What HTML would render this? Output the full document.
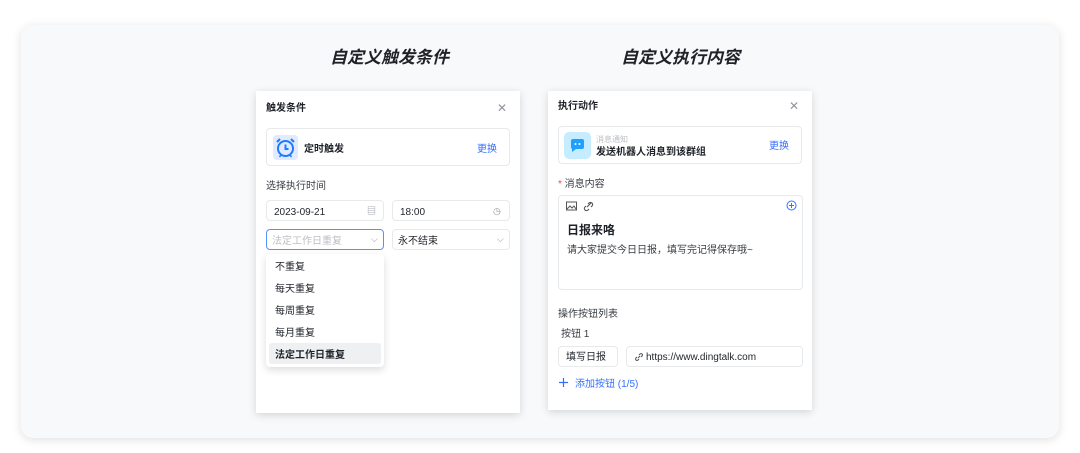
<!DOCTYPE html>
<html><head><meta charset="utf-8"><style>
*{box-sizing:border-box;margin:0;padding:0}
body{width:1080px;height:453px;background:#fff;font-family:"Liberation Sans","Noto Sans CJK SC",sans-serif;position:relative;overflow:hidden;color:#1f2329;line-height:1}
.a{position:absolute;white-space:nowrap}
.card{left:21px;top:25px;width:1038px;height:413px;background:#f8f9fb;border-radius:12px;box-shadow:0 2px 10px rgba(0,0,0,.12)}
.title{font-size:17px;font-weight:bold;font-style:italic;color:#1f2329;top:47px}
.panel{background:#fff;box-shadow:0 2px 8px rgba(0,0,0,.15)}
.h{font-size:10px;font-weight:bold}
.box{border:1px solid #e8e9eb;border-radius:4px;background:#fff}
.t10{font-size:10px}
.blue{color:#3370ff}
.x{font-size:12px;color:#8f959e}
.gray{color:#8f959e}
.h,.t10,.title,.x,.s8{margin-top:2px}
</style></head><body>
<div class="a card"></div>
<div class="a title" style="left:330px">自定义触发条件</div>
<div class="a title" style="left:621px">自定义执行内容</div>

<!-- left panel -->
<div class="a panel" style="left:256px;top:91px;width:264px;height:322px"></div>
<div class="a h" style="left:266px;top:102px">触发条件</div>
<div class="a x" style="left:497px;top:100px">✕</div>
<div class="a box" style="left:266px;top:128px;width:244px;height:38px"></div>
<div class="a" style="left:273px;top:135px;width:25px;height:25px;background:#e1eaff;border-radius:4px"></div>
<svg class="a" style="left:273px;top:135px" width="25" height="25" viewBox="0 0 25 25"><circle cx="12.5" cy="13.5" r="7.5" fill="none" stroke="#1f7cff" stroke-width="2"/><path d="M12.5 9.5v4.5h3" fill="none" stroke="#1f7cff" stroke-width="2"/><path d="M4 7l3-3M21 7l-3-3" stroke="#1f7cff" stroke-width="2"/><path d="M8 20l-1.5 2M17 20l1.5 2" stroke="#1f7cff" stroke-width="1.5"/></svg>
<div class="a h" style="left:304px;top:143px">定时触发</div>
<div class="a t10 blue" style="left:477px;top:143px">更换</div>
<div class="a t10" style="left:266px;top:180px;color:#373c43">选择执行时间</div>
<div class="a box" style="left:266px;top:200px;width:118px;height:21px"></div>
<div class="a t10" style="left:274px;top:206px">2023-09-21</div>
<div class="a gray" style="left:367px;top:207px;font-size:9px">▤</div>
<div class="a box" style="left:392px;top:200px;width:118px;height:21px"></div>
<div class="a t10" style="left:400px;top:206px">18:00</div>
<div class="a gray" style="left:493px;top:207px;font-size:9px">◷</div>
<div class="a box" style="left:266px;top:229px;width:118px;height:21px;border-color:#5b8ff9"></div>
<div class="a t10" style="left:272px;top:235px;color:#bbbfc4">法定工作日重复</div>
<div class="a gray" style="left:371px;top:235px;font-size:9px">⌵</div>
<div class="a box" style="left:392px;top:229px;width:118px;height:21px"></div>
<div class="a t10" style="left:398px;top:235px">永不结束</div>
<div class="a gray" style="left:497px;top:235px;font-size:9px">⌵</div>
<div class="a" style="left:266px;top:254px;width:118px;height:113px;background:#fff;border-radius:4px;box-shadow:0 3px 8px rgba(0,0,0,.14)"></div>
<div class="a t10" style="left:275px;top:261px">不重复</div>
<div class="a t10" style="left:275px;top:283px">每天重复</div>
<div class="a t10" style="left:275px;top:305px">每周重复</div>
<div class="a t10" style="left:275px;top:327px">每月重复</div>
<div class="a" style="left:269px;top:343px;width:112px;height:21px;background:#eff0f1;border-radius:3px"></div>
<div class="a t10" style="left:275px;top:349px;font-weight:bold">法定工作日重复</div>

<!-- right panel -->
<div class="a panel" style="left:548px;top:91px;width:264px;height:319px"></div>
<div class="a h" style="left:558px;top:100px">执行动作</div>
<div class="a x" style="left:789px;top:98px">✕</div>
<div class="a box" style="left:558px;top:126px;width:244px;height:38px"></div>
<div class="a" style="left:564px;top:132px;width:27px;height:27px;background:#c6ecff;border-radius:5px"></div>
<svg class="a" style="left:564px;top:132px" width="27" height="27" viewBox="0 0 27 27"><path d="M7 9a2 2 0 0 1 2-2h9a2 2 0 0 1 2 2v6a2 2 0 0 1-2 2h-6l-4 3v-3a2 2 0 0 1-1-2z" fill="#1f9fff"/><circle cx="11.5" cy="12" r="1" fill="#fff"/><circle cx="15.5" cy="12" r="1" fill="#fff"/></svg>
<div class="a s8" style="left:596px;top:134px;font-size:8px;color:#bbbfc4">消息通知</div>
<div class="a h" style="left:596px;top:146px">发送机器人消息到该群组</div>
<div class="a t10 blue" style="left:769px;top:140px">更换</div>
<div class="a t10" style="left:558px;top:178px;color:#373c43"><span style="color:#f54a45">*</span> 消息内容</div>
<div class="a box" style="left:558px;top:195px;width:245px;height:95px"></div>
<svg class="a" style="left:566px;top:201px" width="30" height="11" viewBox="0 0 30 11"><rect x="0.5" y="1" width="10" height="8" fill="none" stroke="#555" stroke-width="1"/><path d="M1 8l3-3 2 2 2-2 2 3" fill="none" stroke="#555" stroke-width="1"/><path d="M21 6l4-4M20 5l-1 1a2 2 0 0 0 3 3l1-1M25 6l1-1a2 2 0 0 0-3-3l-1 1" fill="none" stroke="#555" stroke-width="1.1"/></svg>
<svg class="a" style="left:786px;top:200px" width="11" height="11" viewBox="0 0 11 11"><circle cx="5.5" cy="5.5" r="4.5" fill="none" stroke="#3370ff"/><path d="M5.5 3v5M3 5.5h5" stroke="#3370ff"/></svg>
<div class="a" style="left:567px;top:223px;font-size:12px;font-weight:bold;margin-top:1px">日报来咯</div>
<div class="a t10" style="left:567px;top:244px;color:#373c43">请大家提交今日日报，填写完记得保存哦~</div>
<div class="a t10" style="left:558px;top:308px;color:#373c43">操作按钮列表</div>
<div class="a t10" style="left:561px;top:328px;color:#373c43">按钮 1</div>
<div class="a box" style="left:558px;top:346px;width:60px;height:21px"></div>
<div class="a t10" style="left:566px;top:351px">填写日报</div>
<div class="a box" style="left:626px;top:346px;width:177px;height:21px"></div>
<svg class="a" style="left:634px;top:352px" width="10" height="10" viewBox="0 0 10 10"><path d="M4 6l2-2M3 5l-1 1a1.4 1.4 0 0 0 2 2l1-1M7 5l1-1a1.4 1.4 0 0 0-2-2l-1 1" fill="none" stroke="#555" stroke-width="1"/></svg>
<div class="a t10" style="left:646px;top:351px">https://www.dingtalk.com</div>
<svg class="a" style="left:558px;top:377px" width="11" height="11" viewBox="0 0 11 11"><path d="M5.5 1v9M1 5.5h9" stroke="#3370ff" stroke-width="1.2"/></svg>
<div class="a t10 blue" style="left:575px;top:378px">添加按钮 (1/5)</div>
</body></html>
